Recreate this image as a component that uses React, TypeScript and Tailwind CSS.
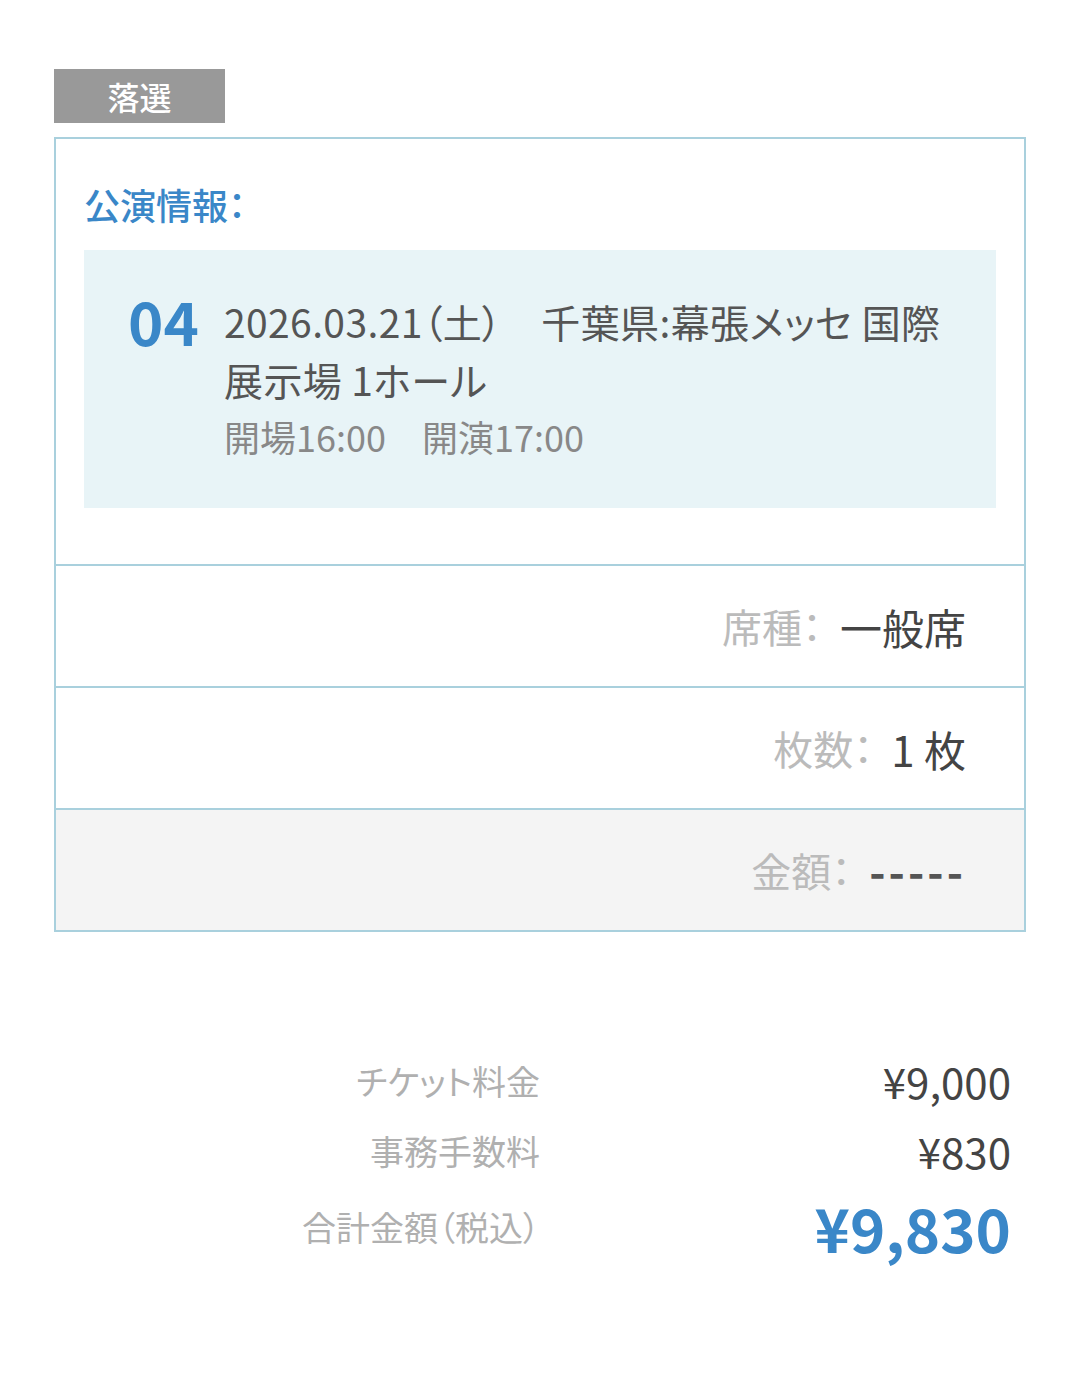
import React from 'react';

const font = { fontFamily: '"Noto Sans CJK JP", "Noto Sans", sans-serif' };

function DetailRow({ label, value, shaded = false, dashes = false }: { label: string; value: string; shaded?: boolean; dashes?: boolean }) {
  return (
    <div
      className={`flex h-[122px] items-center justify-end border-t-2 border-[#a9d0dd] pr-[58px] ${
        shaded ? 'bg-[#f4f4f4]' : 'bg-white'
      }`}
    >
      <span className="mr-[18px] text-[40px] text-[#bbbbbb]">{label}：</span>
      <span
        className={
          dashes
            ? 'text-[44px] font-bold tracking-[0.07em] text-[#555]'
            : 'text-[42px] text-[#444]'
        }
      >
        {value}
      </span>
    </div>
  );
}

export default function App() {
  return (
    <div className="min-h-[1389px] bg-white px-[54px] pt-[69px] [font-feature-settings:'palt']" style={font}>
      <div className="flex h-[54px] w-[171px] items-center justify-center bg-[#999999] text-[32px] font-medium text-white">
        落選
      </div>

      <div className="mt-[14px] border-2 border-[#a9d0dd]">
        <div className="px-[28px] pb-[56px] pt-[38px]">
          <div className="text-[36px] font-medium leading-[54px] text-[#3a87c8]">公演情報：</div>
          <div className="mt-[19px] flex bg-[#e8f4f7] pb-[44px] pl-[44px] pr-[40px] pt-[42px]">
            <div className="w-[96px] shrink-0 text-[60px] font-bold leading-[56px] text-[#3a87c8]">04</div>
            <div>
              <div className="text-[39px] leading-[58px] tracking-[0.01em] text-[#555]">
                2026.03.21（土）　千葉県:幕張メッセ 国際展示場 1ホール
              </div>
              <div className="text-[36px] leading-[56px] text-[#888]">開場16:00　開演17:00</div>
            </div>
          </div>
        </div>
        <DetailRow label="席種" value="一般席" />
        <DetailRow label="枚数" value="1 枚" />
        <DetailRow label="金額" value="-----" shaded dashes />
      </div>

      <div className="mt-[114px] grid grid-cols-2 items-center">
        <div className="h-[70px] text-right text-[34px] leading-[70px] text-[#b0b0b0]">チケット料金</div>
        <div className="h-[70px] pr-[15px] text-right text-[42px] leading-[70px] text-[#444]">¥9,000</div>
        <div className="h-[70px] text-right text-[34px] leading-[70px] text-[#b0b0b0]">事務手数料</div>
        <div className="h-[70px] pr-[15px] text-right text-[42px] leading-[70px] text-[#444]">¥830</div>
        <div className="h-[82px] text-right text-[34px] leading-[82px] text-[#b0b0b0]">合計金額（税込）</div>
        <div className="h-[82px] pr-[15px] text-right text-[60px] font-bold leading-[82px] text-[#3a87c8]">¥9,830</div>
      </div>
    </div>
  );
}
